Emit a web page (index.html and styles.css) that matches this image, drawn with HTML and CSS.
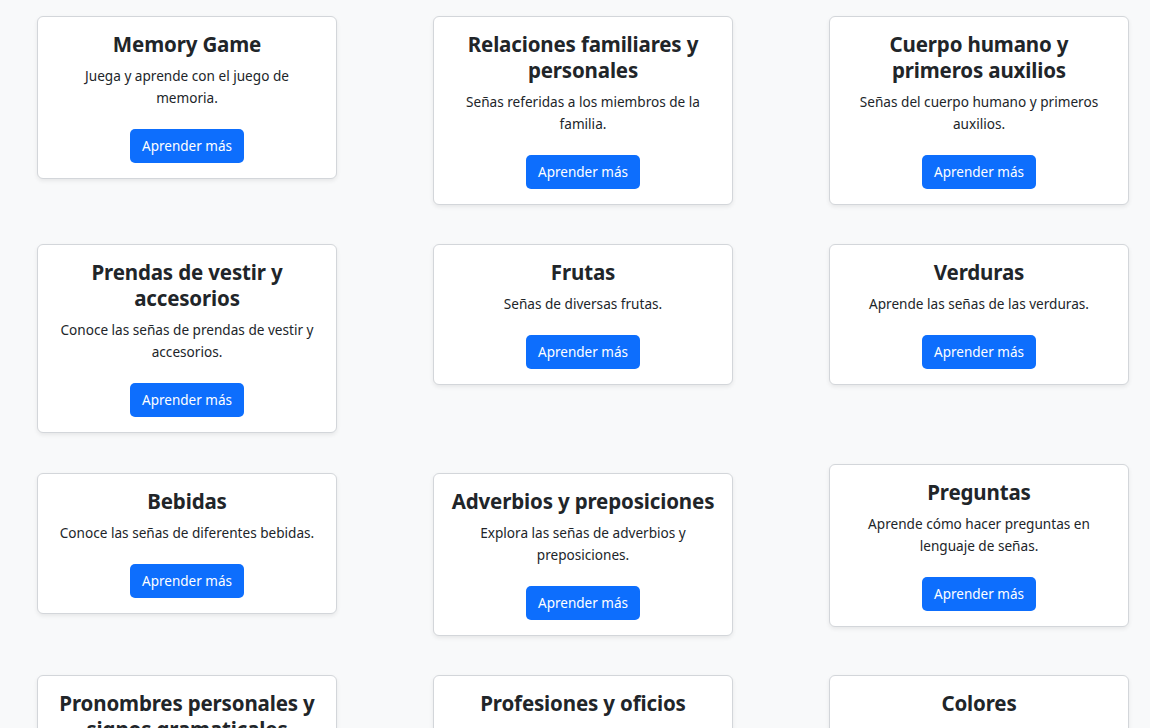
FILE: index.html
```html
<!DOCTYPE html>
<html lang="es">
<head>
<meta charset="utf-8">
<title>Temas</title>
<link rel="stylesheet" href="styles.css">
</head>
<body>
<main class="grid">
  <div class="card">
    <h4 class="card-title">Memory Game</h4>
    <p class="card-text">Juega y aprende con el juego de memoria.</p>
    <a class="btn" href="#">Aprender más</a>
  </div>
  <div class="card">
    <h4 class="card-title">Relaciones familiares y personales</h4>
    <p class="card-text">Señas referidas a los miembros de la familia.</p>
    <a class="btn" href="#">Aprender más</a>
  </div>
  <div class="card">
    <h4 class="card-title">Cuerpo humano y primeros auxilios</h4>
    <p class="card-text">Señas del cuerpo humano y primeros auxilios.</p>
    <a class="btn" href="#">Aprender más</a>
  </div>
  <div class="card">
    <h4 class="card-title">Prendas de vestir y accesorios</h4>
    <p class="card-text">Conoce las señas de prendas de vestir y accesorios.</p>
    <a class="btn" href="#">Aprender más</a>
  </div>
  <div class="card">
    <h4 class="card-title">Frutas</h4>
    <p class="card-text">Señas de diversas frutas.</p>
    <a class="btn" href="#">Aprender más</a>
  </div>
  <div class="card">
    <h4 class="card-title">Verduras</h4>
    <p class="card-text">Aprende las señas de las verduras.</p>
    <a class="btn" href="#">Aprender más</a>
  </div>
  <div class="card">
    <h4 class="card-title">Bebidas</h4>
    <p class="card-text">Conoce las señas de diferentes bebidas.</p>
    <a class="btn" href="#">Aprender más</a>
  </div>
  <div class="card">
    <h4 class="card-title">Adverbios y preposiciones</h4>
    <p class="card-text">Explora las señas de adverbios y preposiciones.</p>
    <a class="btn" href="#">Aprender más</a>
  </div>
  <div class="card card--raised">
    <h4 class="card-title">Preguntas</h4>
    <p class="card-text">Aprende cómo hacer preguntas en lenguaje de señas.</p>
    <a class="btn" href="#">Aprender más</a>
  </div>
  <div class="card">
    <h4 class="card-title">Pronombres personales y signos gramaticales</h4>
    <p class="card-text">Aprende los pronombres personales y signos gramaticales.</p>
    <a class="btn" href="#">Aprender más</a>
  </div>
  <div class="card">
    <h4 class="card-title">Profesiones y oficios</h4>
    <p class="card-text">Conoce las señas de profesiones y oficios.</p>
    <a class="btn" href="#">Aprender más</a>
  </div>
  <div class="card">
    <h4 class="card-title">Colores</h4>
    <p class="card-text">Aprende las señas de los colores.</p>
    <a class="btn" href="#">Aprender más</a>
  </div>
</main>
</body>
</html>
```

FILE: styles.css
```css
* { box-sizing: border-box; }
html, body { margin: 0; padding: 0; }
body {
  background: #f8f9fa;
  font-family: "Noto Sans", "Open Sans", sans-serif;
  color: #212529;
  overflow: hidden;
  height: 728px;
}
.grid {
  display: grid;
  grid-template-columns: repeat(3, 300px);
  column-gap: 96px;
  row-gap: 39.3px;
  align-items: start;
  padding: 16px 0 0 37px;
}
.card {
  background: #fff;
  border: 1px solid #d3d6da;
  border-radius: 6px;
  box-shadow: 0 2px 4px rgba(0,0,0,0.075);
  padding: 14px 16px 15px;
  text-align: center;
  display: flex;
  flex-direction: column;
  align-items: center;
}
.card--raised { margin-top: -9px; }
.card-title {
  margin: 0 0 8px;
  font-size: 20.5px;
  line-height: 26px;
  font-weight: 700;
  letter-spacing: -0.15px;
}
.card-text {
  margin: 0 0 20px;
  font-size: 13.6px;
  line-height: 22px;
  max-width: 256px;
}
.btn {
  display: inline-block;
  background: #0d6efd;
  color: #fff;
  text-decoration: none;
  font-size: 13.5px;
  line-height: 20px;
  padding: 7px 12px;
  border-radius: 5px;
}
```
